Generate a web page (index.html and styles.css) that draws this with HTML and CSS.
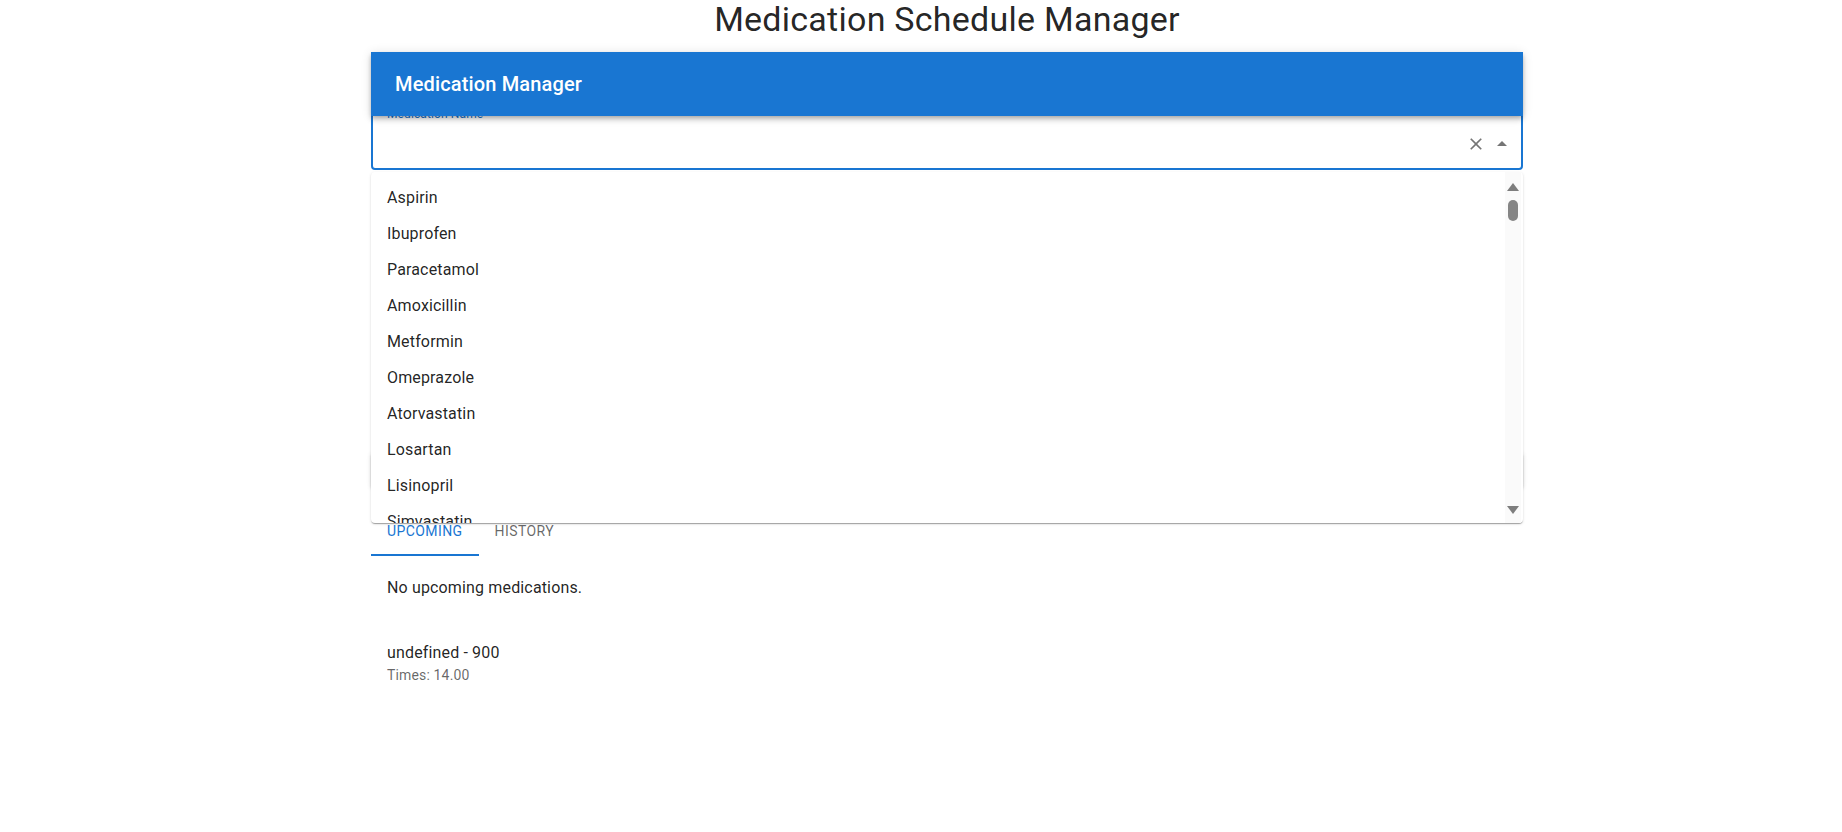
FILE: index.html
```html
<!DOCTYPE html>
<html lang="en">
<head>
<meta charset="utf-8">
<title>Medication Schedule Manager</title>
<link rel="stylesheet" href="styles.css">
</head>
<body>
<div class="page">
  <div class="container">
    <h1 class="title">Medication Schedule Manager</h1>
    <div class="card">
      <header class="appbar">
        <h2 class="appbar-title">Medication Manager</h2>
      </header>
      <div class="card-body">
        <div class="autocomplete">
          <div class="field focused">
            <label class="field-label">Medication Name</label>
            <input class="field-input" type="text" value="">
            <div class="adornments">
              <span class="icon-btn clear">
                <svg viewBox="0 0 24 24" width="20" height="20"><path d="M19 6.41 17.59 5 12 10.59 6.41 5 5 6.41 10.59 12 5 17.59 6.41 19 12 13.41 17.59 19 19 17.59 13.41 12z" fill="currentColor"/></svg>
              </span>
              <span class="icon-btn popup">
                <svg viewBox="0 0 24 24" width="24" height="24"><path d="M7 14l5-5 5 5z" fill="currentColor"/></svg>
              </span>
            </div>
          </div>
          <div class="popper">
            <ul class="listbox">
              <li>Aspirin</li><li>Ibuprofen</li><li>Paracetamol</li><li>Amoxicillin</li><li>Metformin</li>
              <li>Omeprazole</li><li>Atorvastatin</li><li>Losartan</li><li>Lisinopril</li><li>Simvastatin</li>
            </ul>
            <div class="scrollbar" aria-hidden="true">
              <span class="sb-arrow up"></span>
              <span class="sb-thumb"></span>
              <span class="sb-arrow down"></span>
            </div>
          </div>
        </div>
        <div class="field plain"><label class="plain-label">Dosage</label></div>
        <div class="field plain"><label class="plain-label">Time</label></div>
        <div class="field plain"><label class="plain-label">Notes</label></div>
        <button class="add-btn" type="button">Add Medication</button>
      </div>
    </div>

    <div class="tabs">
      <button class="tab active" type="button">Upcoming</button>
      <button class="tab" type="button">History</button>
    </div>
    <div class="tab-panel">
      <p class="empty">No upcoming medications.</p>
      <ul class="sched-list">
        <li class="sched-item">
          <span class="primary">undefined - 900</span>
          <span class="secondary">Times: 14.00</span>
        </li>
      </ul>
    </div>
  </div>
</div>
</body>
</html>
```

FILE: styles.css
```css
* { box-sizing: border-box; }

html, body {
  margin: 0;
  padding: 0;
  background: #ffffff;
}

body {
  font-family: Roboto, "Noto Sans", "Liberation Sans", sans-serif;
  color: rgba(0, 0, 0, 0.87);
}

.page {
  padding: 0 24px 0 76px;
}

.container {
  max-width: 1152px;
  margin: 0 auto;
}

.title {
  margin: -2px 0 12px;
  font-size: 34px;
  font-weight: 400;
  line-height: 42px;
  text-align: center;
  letter-spacing: 0.00735em;
  color: rgba(0, 0, 0, 0.87);
}

.card {
  background: #fff;
}

.appbar {
  position: relative;
  z-index: 5;
  height: 64px;
  background: #1976d2;
  color: #fff;
  display: flex;
  align-items: center;
  padding: 0 24px;
  box-shadow: 0 2px 4px -1px rgba(0,0,0,0.2), 0 4px 5px 0 rgba(0,0,0,0.14), 0 1px 10px 0 rgba(0,0,0,0.12);
}

.appbar-title {
  margin: 0;
  font-size: 20px;
  font-weight: 500;
  line-height: 1.6;
  letter-spacing: 0.0075em;
}

.card-body {
  display: flex;
  flex-direction: column;
  gap: 16px;
}

.autocomplete {
  position: relative;
  z-index: 3;
}

.field {
  position: relative;
  height: 58px;
  border-radius: 4px;
  display: flex;
  align-items: center;
}

.field.focused {
  margin-top: -4px;
  border: 2px solid #1976d2;
}

.field-label {
  position: absolute;
  left: 9px;
  top: -6px;
  padding: 0 5px;
  background: #fff;
  font-size: 12px;
  line-height: 12px;
  color: #1976d2;
  letter-spacing: 0.00938em;
}

.field-input {
  flex: 1;
  border: 0;
  outline: 0;
  background: transparent;
  height: 100%;
  padding: 0 14px;
  font-family: inherit;
  font-size: 16px;
}

.adornments {
  display: flex;
  align-items: center;
  padding-right: 5px;
  padding-top: 5px;
  color: rgba(0, 0, 0, 0.54);
}

.icon-btn {
  display: flex;
  align-items: center;
  justify-content: center;
  width: 28px;
  height: 28px;
}

.icon-btn.clear {
  width: 24px;
}

.icon-btn.clear svg { width: 20px; height: 20px; }

.popper {
  position: absolute;
  top: calc(100% + 2px);
  left: 0;
  right: 0;
  background: #fff;
  border-radius: 4px;
  box-shadow: 0 2px 1px -1px rgba(0,0,0,0.2), 0 1px 1px 0 rgba(0,0,0,0.14), 0 1px 3px 0 rgba(0,0,0,0.12);
  overflow: hidden;
}

.listbox {
  list-style: none;
  margin: 0;
  padding: 8px 0;
  height: 351px;
  overflow: hidden;
}

.listbox li {
  padding: 6px 16px;
  font-size: 16px;
  line-height: 24px;
  letter-spacing: 0.00938em;
  color: rgba(0, 0, 0, 0.87);
}

.scrollbar {
  position: absolute;
  top: 0;
  right: 2px;
  bottom: 0;
  width: 16px;
  background: #fafafa;
  display: flex;
  flex-direction: column;
  align-items: center;
  padding: 11px 0 9px;
}

.sb-arrow {
  width: 0;
  height: 0;
  border-left: 6px solid transparent;
  border-right: 6px solid transparent;
}

.sb-arrow.up {
  border-bottom: 8px solid #7d7d7d;
}

.sb-arrow.down {
  margin-top: auto;
  border-top: 8px solid #7d7d7d;
}

.sb-thumb {
  margin-top: 9px;
  width: 10px;
  height: 21px;
  border-radius: 5px;
  background: #858585;
}

.field.plain {
  height: 56px;
  border: 1px solid rgba(0, 0, 0, 0.23);
}

.plain-label {
  padding: 0 14px;
  font-size: 16px;
  color: rgba(0, 0, 0, 0.6);
}

.add-btn {
  align-self: stretch;
  height: 36px;
  margin-top: 50px;
  border: 0;
  border-radius: 4px;
  background: #1976d2;
  color: #fff;
  font-family: inherit;
  font-size: 14px;
  font-weight: 500;
  text-transform: uppercase;
  box-shadow: 0 3px 1px -2px rgba(0,0,0,0.2), 0 2px 2px 0 rgba(0,0,0,0.14), 0 1px 5px 0 rgba(0,0,0,0.12);
}

.tabs {
  display: flex;
  margin-top: 20px;
}

.tab {
  min-width: 90px;
  min-height: 48px;
  padding: 13px 16px 11px;
  border: 0;
  background: transparent;
  font-family: inherit;
  font-size: 14px;
  font-weight: 400;
  line-height: 1.25;
  letter-spacing: 0.03em;
  text-transform: uppercase;
  color: rgba(0, 0, 0, 0.6);
  border-bottom: 2px solid transparent;
}

.tab.active {
  color: #1976d2;
  border-bottom-color: #1976d2;
}

.tab-panel {
  padding: 20px 16px;
}

.empty {
  margin: 0;
  font-size: 16px;
  line-height: 24px;
  letter-spacing: 0.00938em;
}

.sched-list {
  list-style: none;
  margin: 41px 0 0;
  padding: 0;
}

.sched-item {
  display: flex;
  flex-direction: column;
}

.primary {
  font-size: 16px;
  line-height: 24px;
  letter-spacing: 0.00938em;
}

.secondary {
  font-size: 14px;
  line-height: 20px;
  letter-spacing: 0.01071em;
  color: rgba(0, 0, 0, 0.6);
}
```
